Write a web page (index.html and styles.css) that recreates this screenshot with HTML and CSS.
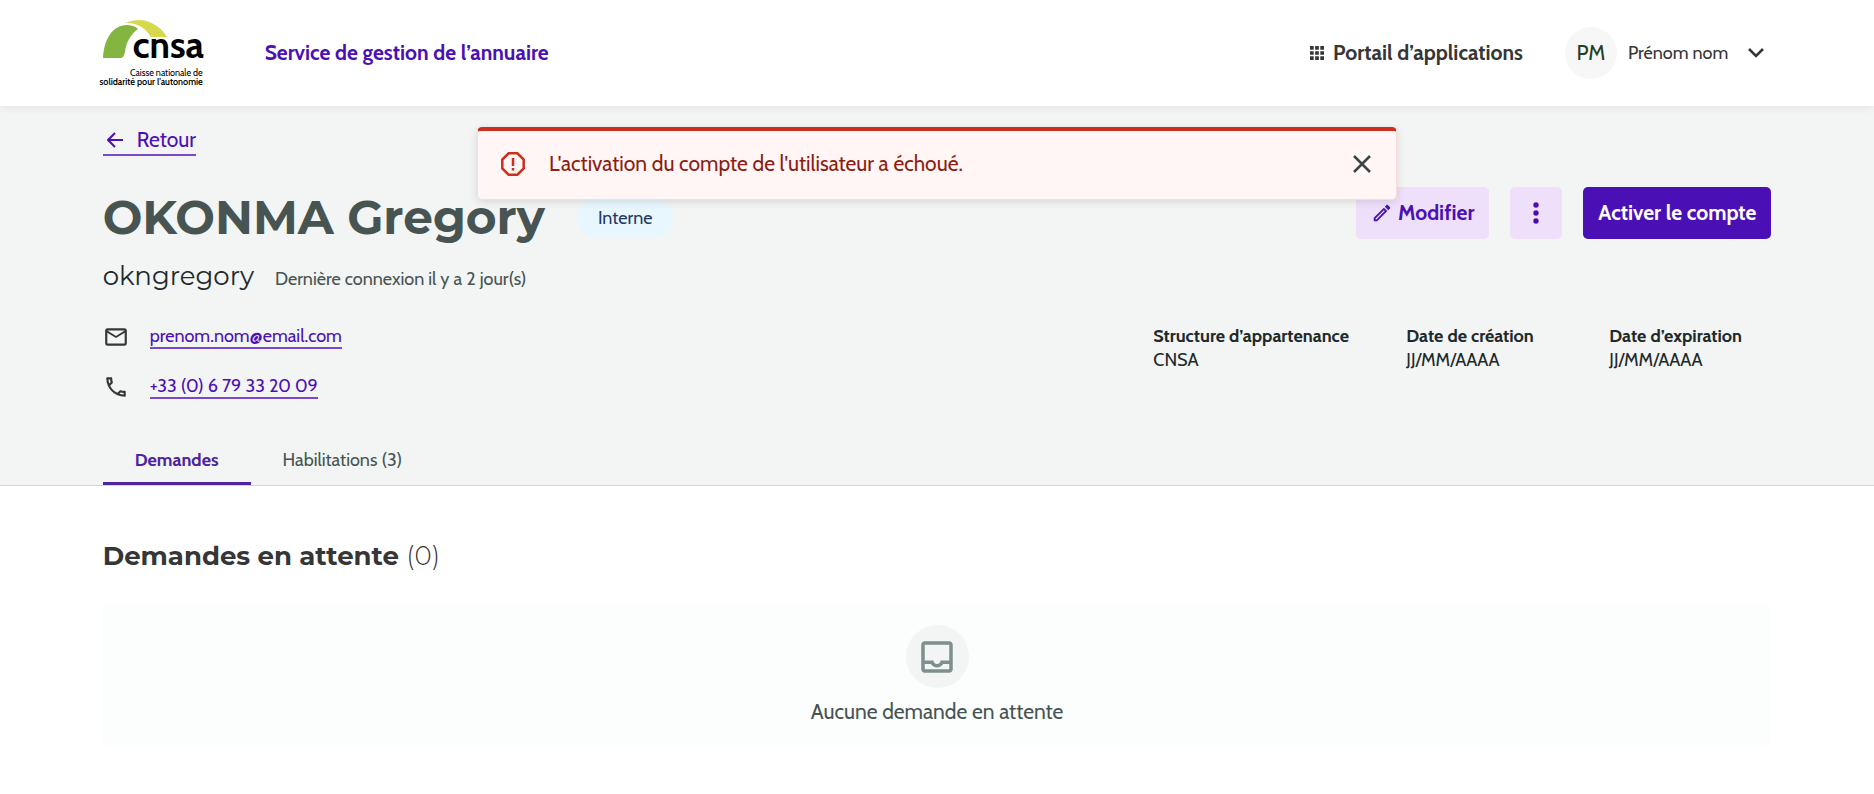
FILE: index.html
```html
<!DOCTYPE html>
<html lang="fr">
<head>
    <meta charset="UTF-8">
    <title>Service de gestion de l’annuaire</title>
    <link rel="stylesheet" href="styles.css">
</head>
<body>
    <header class="header">
        <a class="logo" href="#" aria-label="CNSA">
            <svg class="logo-mark" viewBox="0 0 100 40" aria-hidden="true">
                <path fill="#84b541" d="M0 38C1 20 9 5 24 5c4 0 8 1 11 4-8 6-12 14-13 23-1 4-2 6-5 6z"/>
                <path fill="#d5d94b" d="M22 3C27 1 32 0 37 0c12 1 21 7 27 17H48C43 9 35 2 22 3z"/>
                <text class="logo-name" x="101" y="38" text-anchor="end">cnsa</text>
            </svg>
            <span class="logo-line">Caisse nationale de</span>
            <strong class="logo-line">solidarité pour l'autonomie</strong>
        </a>
        <a class="service" href="#">Service de gestion de l’annuaire</a>
        <a class="portal" href="#">
            <svg width="14" height="14" viewBox="0 0 14 14" fill="currentColor">
                <path d="M0 0h3.700v3.700H0zM5.150 0h3.700v3.700h-3.700zM10.300 0H14v3.700h-3.700zM0 5.150h3.700v3.700H0zM5.150 5.150h3.700v3.700h-3.700zM10.300 5.150H14v3.700h-3.700zM0 10.300h3.700V14H0zM5.150 10.300h3.700V14h-3.700zM10.300 10.300H14V14h-3.700z"/>
            </svg>
            Portail d’applications
        </a>
        <button class="user" type="button">
            <span class="avatar">PM</span>
            Prénom nom
            <svg class="chevron" width="16" height="10" viewBox="0 0 16 10" fill="none" stroke="currentColor" stroke-width="2.500">
                <path d="M1 1l7 7 7-7"/>
            </svg>
        </button>
    </header>

    <section class="hero">
        <a class="back" href="#">
            <svg width="16" height="16" viewBox="0 0 16 16" fill="none" stroke="currentColor" stroke-width="2">
                <path d="M8 1L1 8l7 7M1 8h15"/>
            </svg>
            Retour
        </a>

        <div class="title-row">
            <h1>OKONMA Gregory</h1>
            <span class="badge">Interne</span>
            <div class="actions">
                <button class="btn btn-light" type="button">
                    <svg width="22" height="22" viewBox="0 0 24 24" fill="currentColor">
                        <path d="M14.06 9.02l.92.92L5.92 19H5v-.92l9.06-9.06M17.66 3c-.25 0-.51.1-.7.29l-1.83 1.83 3.75 3.75 1.83-1.83c.39-.39.39-1.02 0-1.41l-2.34-2.34c-.2-.2-.45-.29-.71-.29zm-3.6 3.19L3 17.25V21h3.75L17.81 9.94l-3.75-3.75z"/>
                    </svg>
                    Modifier
                </button>
                <button class="btn btn-light btn-icon" type="button" aria-label="Plus d’actions">
                    <svg width="6" height="22" viewBox="0 0 6 22" fill="currentColor">
                        <circle cx="3" cy="3" r="2.700"/>
                        <circle cx="3" cy="11" r="2.700"/>
                        <circle cx="3" cy="19" r="2.700"/>
                    </svg>
                </button>
                <button class="btn btn-primary" type="button">Activer le compte</button>
            </div>
        </div>

        <div class="login-row">
            <span class="login">okngregory</span>
            <span class="last-login">Dernière connexion il y a 2 jour(s)</span>
        </div>

        <div class="details">
            <ul class="contacts">
                <li>
                    <svg width="26" height="26" viewBox="0 0 24 24" fill="currentColor">
                        <path d="M22 6c0-1.100-.9-2-2-2H4c-1.100 0-2 .9-2 2v12c0 1.100.9 2 2 2h16c1.100 0 2-.9 2-2V6zm-2 0l-8 5-8-5h16zm0 12H4V8l8 5 8-5v10z"/>
                    </svg>
                    <a href="mailto:prenom.nom@email.com">prenom.nom@email.com</a>
                </li>
                <li>
                    <svg width="26" height="26" viewBox="0 0 24 24" fill="currentColor">
                        <path d="M6.540 5c.06.890.210 1.760.450 2.590l-1.200 1.200c-.410-1.200-.670-2.470-.760-3.790h1.510m9.860 12.020c.850.240 1.720.390 2.600.450v1.490c-1.320-.090-2.590-.350-3.800-.750l1.200-1.190M7.500 3H4c-.550 0-1 .450-1 1 0 9.390 7.610 17 17 17 .550 0 1-.450 1-1v-3.490c0-.550-.450-1-1-1-1.240 0-2.450-.200-3.570-.570-.100-.040-.210-.050-.310-.050-.260 0-.510.100-.710.290l-2.200 2.200c-2.830-1.450-5.150-3.760-6.590-6.590l2.200-2.200c.280-.280.360-.670.250-1.020C8.700 6.450 8.500 5.250 8.500 4c0-.550-.450-1-1-1z"/>
                    </svg>
                    <a href="tel:+33679332009">+33 (0) 6 79 33 20 09</a>
                </li>
            </ul>
            <dl class="infos">
                <div>
                    <dt>Structure d’appartenance</dt>
                    <dd>CNSA</dd>
                </div>
                <div>
                    <dt>Date de création</dt>
                    <dd>JJ/MM/AAAA</dd>
                </div>
                <div>
                    <dt>Date d’expiration</dt>
                    <dd>JJ/MM/AAAA</dd>
                </div>
            </dl>
        </div>

        <nav class="tabs">
            <a class="tab active" href="#demandes">Demandes</a>
            <a class="tab" href="#habilitations">Habilitations (3)</a>
        </nav>
    </section>

    <main class="content" id="demandes">
        <h2>Demandes en attente <span>(0)</span></h2>
        <div class="empty">
            <div class="empty-icon">
                <svg width="42" height="42" viewBox="0 0 24 24" fill="currentColor">
                    <path d="M19 3H5c-1.100 0-2 .9-2 2v14c0 1.100.9 2 2 2h14c1.100 0 2-.9 2-2V5c0-1.100-.9-2-2-2zm0 16H5v-3h3.560c.690 1.190 1.970 2 3.450 2s2.750-.810 3.450-2H19v3zm0-5h-4.990c0 1.100-.9 2-2 2s-2-.9-2-2H5V5h14v9z"/>
                </svg>
            </div>
            <p>Aucune demande en attente</p>
        </div>
    </main>

    <div class="toast" role="alert">
        <svg width="24" height="24" viewBox="0 0 24 24" fill="none" stroke="currentColor" stroke-width="2.500">
            <path d="M7.600 1.300h8.800l6.300 6.300v8.800l-6.300 6.300H7.600l-6.300-6.300V7.600z"/>
            <path d="M12 6v8M12 16v2.500"/>
        </svg>
        <p>L'activation du compte de l'utilisateur a échoué.</p>
        <button class="toast-close" type="button" aria-label="Fermer">
            <svg width="18" height="18" viewBox="0 0 18 18" fill="none" stroke="currentColor" stroke-width="2.500">
                <path d="M1 1l16 16M17 1L1 17"/>
            </svg>
        </button>
    </div>
</body>
</html>
```
FILE: styles.css
```css
:root {
    --primary: #4b10b5;
    --primary-light: #eee0fb;
    --text: #363636;
    --text-dark: #22292a;
    --text-soft: #475452;
    --background: #f3f5f5;
    --error: #cd2f1f;
    --gutter: 5.48%;
}

* {
    box-sizing: border-box;
}

body {
    margin: 0;
    font-family: Cabin, Lato, sans-serif;
    font-size: 18px;
    line-height: 24px;
    color: var(--text);
    background: white;
}

h1, h2, p, ul, dl, dd {
    margin: 0;
    padding: 0;
}

a {
    color: var(--primary);
    text-decoration: none;
}

button {
    border: none;
    padding: 0;
    background: none;
    font: inherit;
    color: inherit;
    cursor: pointer;
}

svg {
    flex: none;
}

/* header */
.header {
    position: relative;
    display: flex;
    align-items: center;
    height: 106px;
    padding: 0 var(--gutter);
    background: white;
    box-shadow: 0 2px 8px rgba(0, 0, 0, 0.06);
}

.logo {
    display: flex;
    flex-direction: column;
    align-items: flex-end;
    width: 100px;
    color: black;
}

.logo-mark {
    width: 100px;
    height: 40px;
    margin-bottom: 8px;
    overflow: visible;
}

.logo-name {
    font-size: 37px;
    font-weight: bold;
}

.logo-line {
    font-size: 9px;
    line-height: 9px;
    white-space: nowrap;
}

strong.logo-line {
    font-weight: 600;
}

.service {
    margin-left: 62px;
    font-size: 21px;
    font-weight: bold;
}

.portal {
    display: flex;
    align-items: center;
    gap: 9px;
    margin-left: auto;
    font-size: 21px;
    font-weight: bold;
    color: var(--text);
}

.user {
    display: flex;
    align-items: center;
    gap: 11px;
    margin-left: 42px;
    padding-right: 7px;
}

.avatar {
    display: flex;
    align-items: center;
    justify-content: center;
    width: 52px;
    height: 52px;
    border-radius: 50%;
    background: #f7f7f7;
    color: #1f4029;
    font-size: 21px;
}

.chevron {
    margin-left: 9px;
}

/* user summary */
.hero {
    padding: 20px var(--gutter) 0;
    background: var(--background);
    border-bottom: 1px solid #d0d6d5;
}

.back {
    display: inline-flex;
    align-items: center;
    gap: 14px;
    height: 30px;
    padding-left: 4px;
    border-bottom: 2px solid #7a49cb;
    font-size: 21px;
}

.title-row {
    display: flex;
    align-items: center;
    height: 62px;
    margin-top: 31px;
}

h1 {
    font-family: Montserrat, Inter, sans-serif;
    font-size: 47px;
    line-height: 60px;
    color: var(--text-soft);
}

.badge {
    margin-left: 32px;
    padding: 8px 21px;
    border-radius: 20px;
    background: #e8f6fe;
    color: #243a63;
}

.actions {
    display: flex;
    gap: 21px;
    align-self: flex-start;
    margin-left: auto;
}

.btn {
    display: flex;
    align-items: center;
    justify-content: center;
    gap: 5px;
    height: 52px;
    padding: 0 15px;
    border-radius: 5px;
    font-size: 21px;
    font-weight: bold;
}

.btn-light {
    background: var(--primary-light);
    color: var(--primary);
}

.btn-icon {
    width: 52px;
}

.btn-primary {
    background: var(--primary);
    color: white;
}

.login-row {
    display: flex;
    align-items: baseline;
    gap: 21px;
    margin-top: 11px;
    line-height: 32px;
}

.login {
    font-family: Montserrat, Inter, sans-serif;
    font-size: 26px;
    color: var(--text-dark);
}

.last-login {
    color: var(--text-soft);
}

.details {
    display: flex;
    justify-content: space-between;
    margin-top: 29px;
}

.contacts {
    display: grid;
    gap: 24px;
    list-style: none;
}

.contacts li {
    display: flex;
    align-items: center;
    gap: 21px;
}

.contacts a {
    border-bottom: 2px solid #7a49cb;
    line-height: 22px;
}

.infos {
    display: grid;
    grid-template-columns: 253px 203px 162px;
    color: var(--text-dark);
}

dt {
    font-weight: bold;
}

.tabs {
    display: flex;
    margin-top: 36px;
}

.tab {
    padding: 12px 32px 10px;
    border-bottom: 3px solid transparent;
    color: var(--text-soft);
}

.tab.active {
    border-color: #4f249c;
    color: #4f249c;
    font-weight: bold;
}

/* pending requests */
.content {
    padding: 54px var(--gutter) 47px;
}

h2 {
    font-family: Montserrat, Inter, sans-serif;
    font-size: 26px;
    line-height: 32px;
}

h2 span {
    font-weight: 300;
}

.empty {
    display: flex;
    flex-direction: column;
    align-items: center;
    gap: 12px;
    margin-top: 32px;
    padding: 21px 0 22px;
    background: #fbfefd;
    color: var(--text-soft);
    font-size: 21px;
}

.empty-icon {
    display: flex;
    align-items: center;
    justify-content: center;
    width: 63px;
    height: 63px;
    border-radius: 50%;
    background: #f3f5f5;
    color: #7e908d;
}

/* notification shown over the page */
.toast {
    position: absolute;
    top: 127px;
    left: 50%;
    display: flex;
    align-items: center;
    width: 920px;
    max-width: 90%;
    height: 73px;
    padding: 0 25px 2px 23px;
    transform: translateX(-50%);
    border: 1px solid #fbdcd9;
    border-top: 4px solid var(--error);
    border-radius: 5px;
    background: #fff6f5;
    box-shadow: 0 2px 8px rgba(0, 0, 0, 0.12);
    color: var(--error);
    font-size: 21px;
}

.toast p {
    margin-left: 24px;
    color: #8c1d13;
}

.toast-close {
    display: flex;
    margin-left: auto;
    color: #3a4645;
}
```
